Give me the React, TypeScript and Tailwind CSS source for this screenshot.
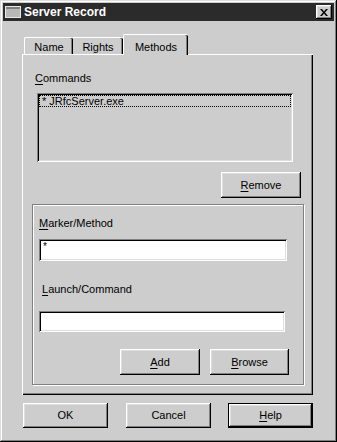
import React from 'react';

const raised =
  'shadow-[inset_-1px_-1px_#000,inset_1px_1px_#fff,inset_-2px_-2px_#808080,inset_2px_2px_#dedede]';
const sunken =
  'shadow-[inset_1px_1px_#808080,inset_-1px_-1px_#fff,inset_2px_2px_#000,inset_-2px_-2px_#dedede]';

function Btn({ label, mnemonic, className = '', isDefault = false }: { label: string; mnemonic?: number; className?: string; isDefault?: boolean }) {
  const text =
    mnemonic === undefined ? (
      label
    ) : (
      <>
        {label.slice(0, mnemonic)}
        <span className="underline underline-offset-2">{label[mnemonic]}</span>
        {label.slice(mnemonic + 1)}
      </>
    );
  if (isDefault) {
    return (
      <div className={`border border-black ${className}`}>
        <div className={`w-full h-full flex items-center justify-center bg-[#cdcdcd] ${raised}`}>{text}</div>
      </div>
    );
  }
  return (
    <div className={`flex items-center justify-center bg-[#cdcdcd] ${raised} ${className}`}>{text}</div>
  );
}

function U({ c }: { c: string }) {
  return <span className="underline underline-offset-2">{c}</span>;
}

export default function App() {
  return (
    <div className="w-[337px] h-[442px] bg-[#cdcdcd] p-[3px] flex flex-col font-['Liberation_Sans',Arial,sans-serif] text-[11px] text-black shadow-[inset_-1px_-1px_#000,inset_1px_1px_#dedede,inset_-2px_-2px_#808080,inset_2px_2px_#fff]">
      {/* Title bar */}
      <div className="h-[18px] bg-[#2b2b2b] flex items-center pl-[2px] pr-[2px] shrink-0">
        <svg width="16" height="12" viewBox="0 0 16 12" className="shrink-0">
          <rect x="0" y="0" width="16" height="12" fill="#b8b8b8" />
          <rect x="0" y="0" width="16" height="3" fill="#808080" />
          <rect x="0.5" y="0.5" width="15" height="11" fill="none" stroke="#e8e8e8" strokeWidth="1" />
        </svg>
        <span className="ml-[3px] text-white font-bold text-[12px] leading-none">Server Record</span>
        <div className={`ml-auto w-[16px] h-[14px] bg-[#cdcdcd] flex items-center justify-center ${raised}`}>
          <svg width="8" height="7" viewBox="0 0 8 7">
            <path d="M0 0h2l2 2.5L6 0h2L5 3.5 8 7H6L4 4.5 2 7H0l3-3.5z" fill="#000" />
          </svg>
        </div>
      </div>

      {/* Tabs */}
      <div className="flex items-end h-[20px] mt-[13px] ml-[19px] shrink-0">
        <div className="ml-[2px] w-[49px] h-[17px] border-t border-l border-white rounded-tl-[2px] rounded-tr-[2px] shadow-[inset_-1px_0_#000,inset_-2px_0_#808080] flex items-center justify-center pt-[2px]">
          Name
        </div>
        <div className="w-[50px] h-[17px] border-t border-white rounded-tr-[2px] shadow-[inset_-1px_0_#000,inset_-2px_0_#808080] flex items-center justify-center pt-[2px]">
          Rights
        </div>
        <div className="relative z-10 -mb-px w-[65px] h-[21px] bg-[#cdcdcd] border-t border-l border-white rounded-tl-[2px] rounded-tr-[2px] shadow-[inset_-1px_0_#000,inset_-2px_0_#808080] flex items-start justify-center pt-[4px]">
          Methods
        </div>
      </div>

      {/* Tab panel */}
      <div className="ml-[19px] w-[291px] h-[341px] border-t border-l border-white shadow-[inset_-1px_-1px_#000,inset_-2px_-2px_#808080] flex flex-col shrink-0">
        <div className="ml-[12px] mt-[17px] leading-[13px]">
          <U c="C" />ommands
        </div>
        <div className={`ml-[14px] mt-[8px] w-[256px] h-[69px] bg-[#cdcdcd] ${sunken} p-[2px]`}>
          <div className="h-[12px] border border-dotted border-black leading-[10px] pl-[2px]">* JRfcServer.exe</div>
        </div>
        <Btn label="Remove" mnemonic={0} className="ml-[198px] mt-[10px] w-[80px] h-[26px]" />

        {/* Group */}
        <div className="ml-[9px] mt-[6px] w-[272px] h-[181px] border border-[#808080] shadow-[inset_1px_1px_#fff,1px_1px_#fff] flex flex-col">
          <div className="ml-[6px] mt-[12px] leading-[13px]">
            <U c="M" />arker/Method
          </div>
          <div className={`ml-[6px] mt-[9px] w-[248px] h-[22px] bg-white ${sunken} pl-[4px] pt-[3px] leading-[10px] text-[10px]`}>*</div>
          <div className="ml-[9px] mt-[22px] leading-[13px]">
            <U c="L" />aunch/Command
          </div>
          <div className={`ml-[6px] mt-[15px] w-[246px] h-[21px] bg-white ${sunken}`} />
          <div className="flex mt-[17px] ml-[87px] gap-[10px]">
            <Btn label="Add" mnemonic={0} className="w-[80px] h-[26px]" />
            <Btn label="Browse" mnemonic={0} className="w-[79px] h-[26px]" />
          </div>
        </div>
      </div>

      {/* Bottom buttons */}
      <div className="flex mt-[8px] ml-[20px] shrink-0">
        <Btn label="OK" className="w-[85px] h-[25px]" />
        <Btn label="Cancel" className="ml-[18px] w-[85px] h-[25px]" />
        <Btn label="Help" mnemonic={0} isDefault className="ml-[17px] w-[85px] h-[25px]" />
      </div>
    </div>
  );
}
